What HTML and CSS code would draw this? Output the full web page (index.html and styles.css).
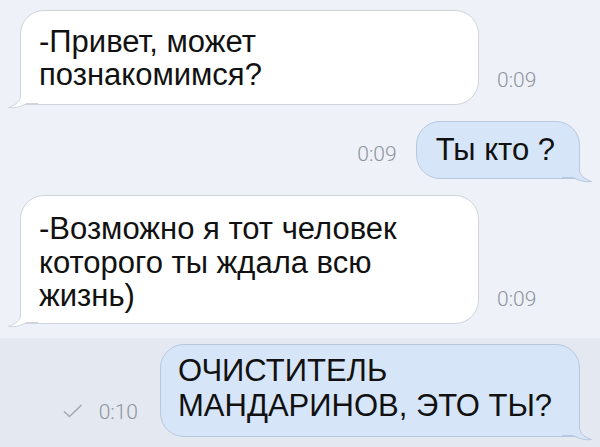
FILE: index.html
```html
<!DOCTYPE html>
<html lang="ru">
<head>
    <meta charset="UTF-8">
    <meta name="viewport" content="width=device-width, initial-scale=1.0">
    <title>Диалог</title>
    <link rel="stylesheet" href="styles.css">
</head>
<body>

<div class="chat">
    <div class="history">
        <div class="row in first">
            <div class="bubble">
                <p>-Привет, может<br>познакомимся?</p>
                <svg class="tail" width="30" height="22" viewBox="0 0 30 22">
                    <path class="tail-fill" d="M12.5 0 L12.5 9 C12.5 14 7 18.5 0.5 20.5 C8 21.5 14 19 18.5 16.5 L30 16.5 L30 0 Z"/>
                    <path class="tail-line" d="M12.5 0 L12.5 9 C12.5 14 7 18.5 0.5 20.5 C8 21.5 14 19 18.5 16.5 L30 16.5"/>
                </svg>
            </div>
            <span class="time">0:09</span>
        </div>

        <div class="row out">
            <span class="time">0:09</span>
            <div class="bubble short">
                <p>Ты кто ?</p>
                <svg class="tail" width="30" height="22" viewBox="0 0 30 22">
                    <path class="tail-fill" d="M12.5 0 L12.5 9 C12.5 14 7 18.5 0.5 20.5 C8 21.5 14 19 18.5 16.5 L30 16.5 L30 0 Z"/>
                    <path class="tail-line" d="M12.5 0 L12.5 9 C12.5 14 7 18.5 0.5 20.5 C8 21.5 14 19 18.5 16.5 L30 16.5"/>
                </svg>
            </div>
        </div>

        <div class="row in third">
            <div class="bubble">
                <p>-Возможно я тот человек<br>которого ты ждала всю<br>жизнь)</p>
                <svg class="tail" width="30" height="22" viewBox="0 0 30 22">
                    <path class="tail-fill" d="M12.5 0 L12.5 9 C12.5 14 7 18.5 0.5 20.5 C8 21.5 14 19 18.5 16.5 L30 16.5 L30 0 Z"/>
                    <path class="tail-line" d="M12.5 0 L12.5 9 C12.5 14 7 18.5 0.5 20.5 C8 21.5 14 19 18.5 16.5 L30 16.5"/>
                </svg>
            </div>
            <span class="time">0:09</span>
        </div>
    </div>

    <div class="unread">
        <div class="row out">
            <svg class="check" width="22" height="16" viewBox="0 0 22 16">
                <path d="M2 8.5 L7.5 13.5 L19.5 2"/>
            </svg>
            <span class="time">0:10</span>
            <div class="bubble wide">
                <p>ОЧИСТИТЕЛЬ<br>МАНДАРИНОВ, ЭТО ТЫ?</p>
                <svg class="tail" width="30" height="22" viewBox="0 0 30 22">
                    <path class="tail-fill" d="M12.5 0 L12.5 9 C12.5 14 7 18.5 0.5 20.5 C8 21.5 14 19 18.5 16.5 L30 16.5 L30 0 Z"/>
                    <path class="tail-line" d="M12.5 0 L12.5 9 C12.5 14 7 18.5 0.5 20.5 C8 21.5 14 19 18.5 16.5 L30 16.5"/>
                </svg>
            </div>
        </div>
    </div>
</div>

</body>
</html>
```

FILE: styles.css
```css
* {
    margin: 0;
    padding: 0;
    box-sizing: border-box;
}

body {
    width: 600px;
    height: 447px;
    overflow: hidden;
    background: #eef1f8;
    font-family: 'Liberation Sans', Arial, sans-serif;
}

.chat {
    display: flex;
    flex-direction: column;
    height: 100%;
}

.history {
    padding-top: 10px;
    display: flex;
    flex-direction: column;
    gap: 16px;
}

.unread {
    flex: 1;
    margin-top: 14px;
    padding-top: 6px;
    background: #e4e9f1;
}

.row {
    display: flex;
    align-items: flex-end;
}

.row.in {
    padding-left: 20px;
}

.row.out {
    justify-content: flex-end;
    padding-right: 20px;
}

.bubble {
    position: relative;
    font-size: 31px;
    line-height: 33px;
    color: #111;
    border: 1px solid #cfd4dc;
    border-radius: 24px;
}

.row.in .bubble {
    width: 459px;
    background: #fff;
    border-bottom-left-radius: 0;
    padding: 14px 18px 13px;
}

.row.third .bubble {
    padding: 16px 18px 10px;
    line-height: 33.5px;
}

.row.out .bubble {
    background: #d7e5f8;
    border-color: #b8c8de;
    border-bottom-right-radius: 0;
}

.bubble.short {
    padding: 11px 24px 12px 19px;
}

.bubble.wide {
    width: 420px;
    padding: 8px 17px 13px;
    line-height: 35px;
}

.tail {
    position: absolute;
    bottom: -5px;
    left: -13px;
}

.row.out .tail {
    left: auto;
    right: -13px;
    transform: scaleX(-1);
}

.tail-fill {
    fill: #fff;
}

.tail-line {
    fill: none;
    stroke: #cfd4dc;
    stroke-width: 1;
}

.row.out .tail-fill {
    fill: #d7e5f8;
}

.row.out .tail-line {
    stroke: #b8c8de;
}

.time {
    font-family: Roboto, 'Liberation Sans', sans-serif;
    font-weight: 300;
    font-size: 21px;
    line-height: 20px;
    color: #8e949d;
    margin-bottom: 15px;
}

.row.in .time {
    margin-left: 18px;
}

.row.out .time {
    margin-right: 19px;
}

.unread .row.out .time {
    margin-right: 22px;
}

.check {
    margin: 0 15px 18px 0;
}

.check path {
    fill: none;
    stroke: #a3a9b2;
    stroke-width: 1.6;
}
```
